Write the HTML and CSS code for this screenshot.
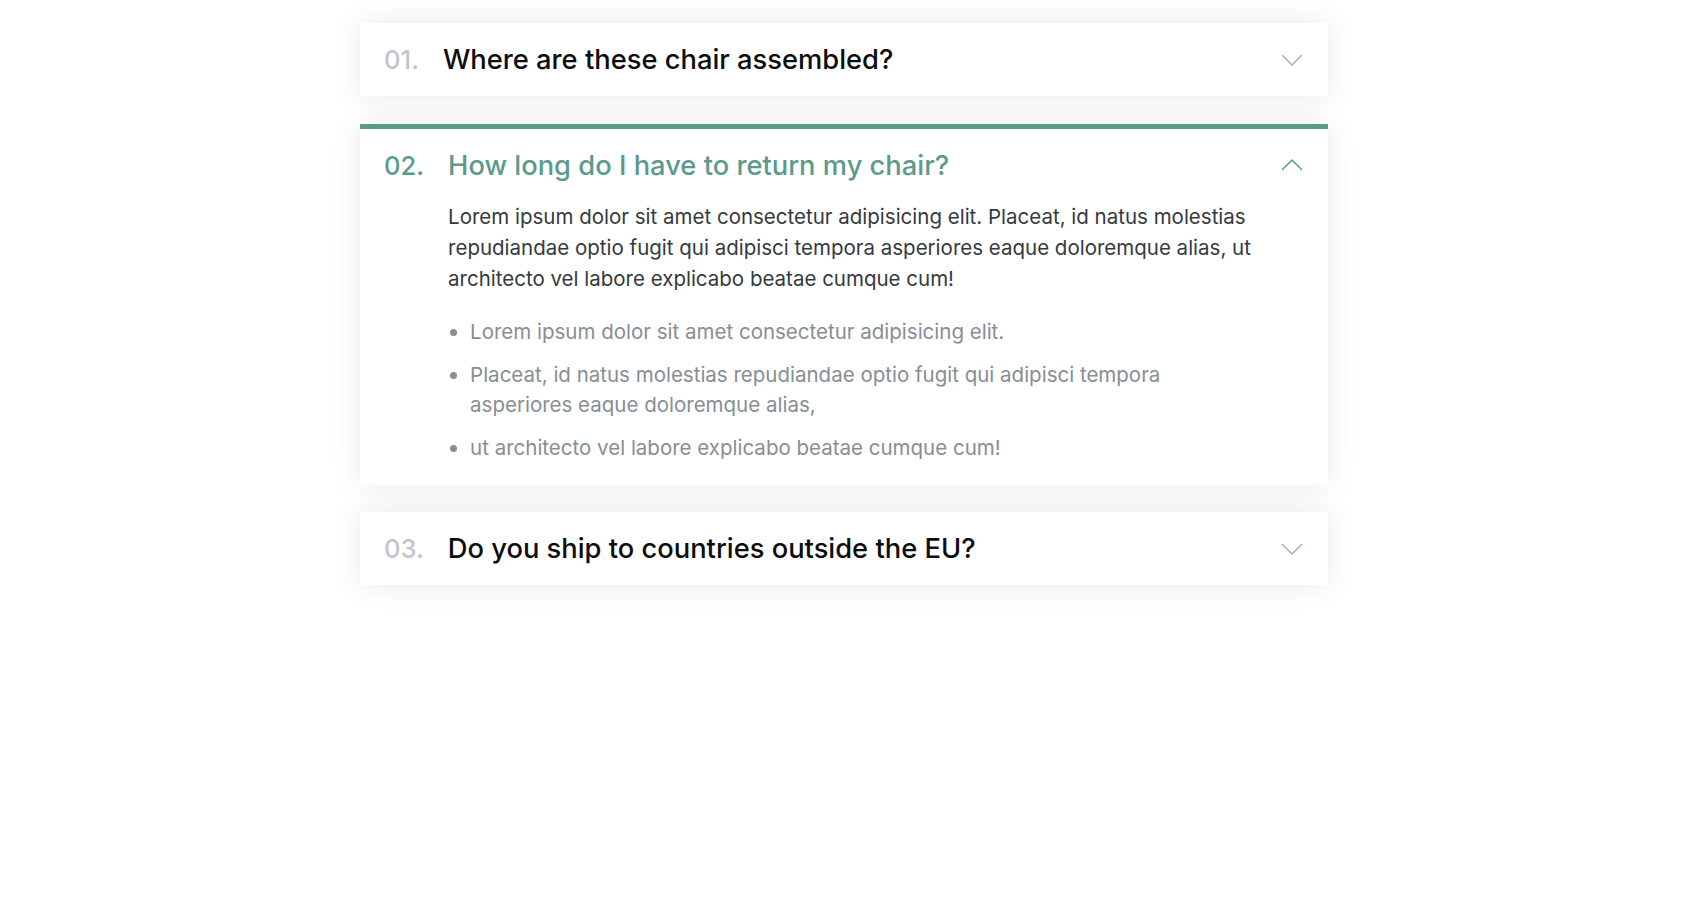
FILE: index.html
```html
<!DOCTYPE html>
<html lang="en">
<head>
<meta charset="utf-8">
<title>FAQ Accordion</title>
<link rel="stylesheet" href="styles.css">
</head>
<body>
<div class="accordion">
  <div class="item">
    <p class="number">01.</p>
    <p class="title">Where are these chair assembled?</p>
    <svg class="icon" viewBox="0 0 24 24" width="24" height="24"><polyline points="2.5,7.5 12,17 21.5,7.5" /></svg>
  </div>

  <div class="item open">
    <p class="number">02.</p>
    <p class="title">How long do I have to return my chair?</p>
    <svg class="icon" viewBox="0 0 24 24" width="24" height="24"><polyline points="2.5,16.5 12,7 21.5,16.5" /></svg>
    <div class="content">
      <p>Lorem ipsum dolor sit amet consectetur adipisicing elit. Placeat, id natus molestias repudiandae optio fugit qui adipisci tempora asperiores eaque doloremque alias, ut architecto vel labore explicabo beatae cumque cum!</p>
      <ul>
        <li>Lorem ipsum dolor sit amet consectetur adipisicing elit.</li>
        <li>Placeat, id natus molestias repudiandae optio fugit qui adipisci tempora asperiores eaque doloremque alias,</li>
        <li>ut architecto vel labore explicabo beatae cumque cum!</li>
      </ul>
    </div>
  </div>

  <div class="item">
    <p class="number">03.</p>
    <p class="title">Do you ship to countries outside the EU?</p>
    <svg class="icon" viewBox="0 0 24 24" width="24" height="24"><polyline points="2.5,7.5 12,17 21.5,7.5" /></svg>
  </div>
</div>
</body>
</html>
```

FILE: styles.css
```css
* {
  margin: 0;
  padding: 0;
  box-sizing: border-box;
}

html {
  background: #fff;
}

body {
  font-family: "Inter", "Noto Sans", sans-serif;
  color: #343a40;
  min-height: 100vh;
  padding: 23px 0 60px;
}

.accordion {
  width: 968px;
  margin: 0 auto;
  display: flex;
  flex-direction: column;
  gap: 27.5px;
}

.item {
  background: #fff;
  box-shadow: 0 0 30px rgba(0, 0, 0, 0.09);
  padding: 24px;
  display: grid;
  grid-template-columns: auto 1fr auto;
  column-gap: 24px;
  row-gap: 23px;
  align-items: center;
}

.item.open {
  border-top: 5px solid #5b9a8c;
  padding-bottom: 22px;
}

.number {
  font-size: 25.6px;
  line-height: 25px;
  font-weight: 500;
  color: #bfc5cb;
}

.title {
  font-size: 27.3px;
  line-height: 25px;
  font-weight: 500;
  color: #0d0d0d;
}

.icon {
  fill: none;
  stroke: #a9afb5;
  stroke-width: 1.5;
  stroke-linecap: round;
  stroke-linejoin: round;
}

.open .number,
.open .title {
  color: #5b9a8c;
}

.open .icon {
  stroke: #5b9a8c;
}

.content {
  grid-column: 2 / 3;
  font-size: 20.5px;
  line-height: 31px;
  color: #343a40;
}

.content p {
  margin-bottom: 23px;
}

.content ul {
  color: #868e96;
  line-height: 30px;
  padding-left: 22px;
  display: flex;
  flex-direction: column;
  gap: 13px;
}
```
